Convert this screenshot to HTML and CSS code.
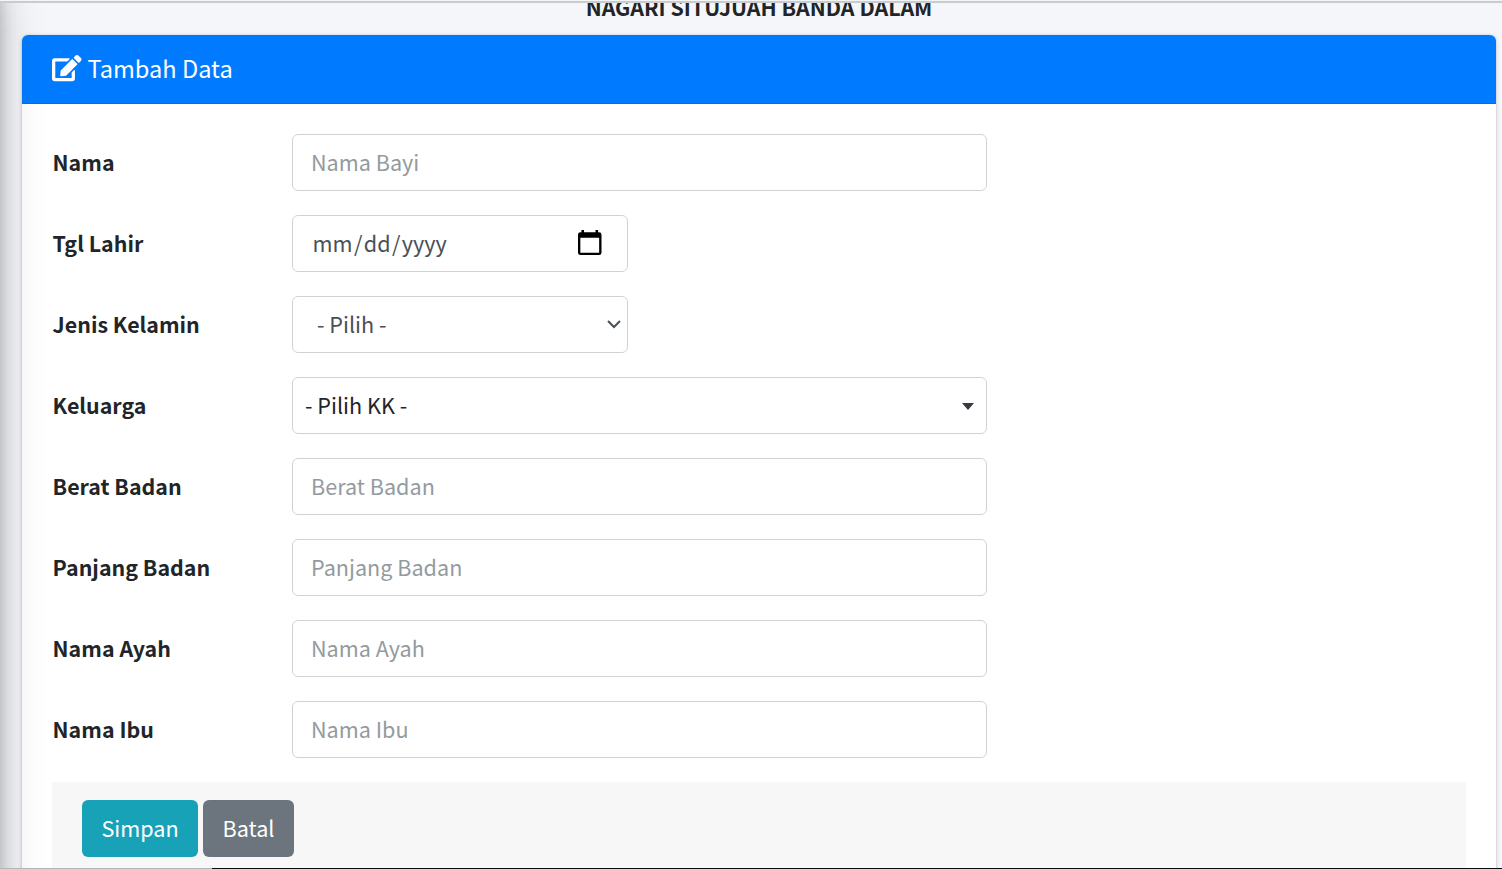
FILE: index.html
```html
<!DOCTYPE html>
<html lang="id">
<head>
<meta charset="utf-8">
<title>Tambah Data</title>
<link rel="stylesheet" href="styles.css">
</head>
<body>
<div class="page">
  <div class="topline"></div>
  <h1 class="heading">NAGARI SITUJUAH BANDA DALAM</h1>
  <main class="card">
    <header class="card-header">
      <svg class="edit-icon" viewBox="0 0 576 512"><path fill="#fff" d="M402.6 83.2l90.2 90.2c3.8 3.8 3.8 10 0 13.8L274.4 405.6l-92.8 10.3c-12.4 1.4-22.9-9.1-21.5-21.5l10.3-92.8L388.8 83.2c3.8-3.8 10-3.8 13.8 0zm162-22.9l-48.8-48.8c-15.2-15.2-39.9-15.2-55.2 0l-35.4 35.4c-3.8 3.8-3.8 10 0 13.8l90.2 90.2c3.8 3.8 10 3.8 13.8 0l35.4-35.4c15.2-15.3 15.2-40 0-55.2zM384 346.2V448H64V128h229.8c3.2 0 6.2-1.3 8.5-3.5l40-40c7.6-7.6 2.2-20.5-8.5-20.5H48C21.5 64 0 85.5 0 112v352c0 26.5 21.5 48 48 48h352c26.5 0 48-21.5 48-48V306.2c0-10.7-12.9-16-20.5-8.5l-40 40c-2.2 2.3-3.5 5.3-3.5 8.5z"/></svg>
      <span class="title">Tambah Data</span>
    </header>
    <form class="card-body">
      <div class="row"><label class="label">Nama</label><input class="control" placeholder="Nama Bayi"></div>
      <div class="row"><label class="label">Tgl Lahir</label>
        <div class="control short date"><span class="date-text">mm<span class="slash">/</span>dd<span class="slash">/</span>yyyy</span>
          <svg class="calendar" viewBox="0 0 24 26"><path fill="#000" fill-rule="evenodd" d="M3.5 0h2.6v2.4h11.8V0h2.6v2.4h1A2.5 2.5 0 0 1 24 4.9v18.2a2.5 2.5 0 0 1-2.5 2.4h-19A2.5 2.5 0 0 1 0 23.1V4.9A2.5 2.5 0 0 1 2.5 2.4h1zM2.4 8v15.2h19.2V8z"/></svg>
        </div></div>
      <div class="row"><label class="label">Jenis Kelamin</label>
        <div class="control short select"><span>- Pilih -</span>
          <svg class="chevron" viewBox="0 0 14 9"><path fill="none" stroke="#495057" stroke-width="2" d="M1 1l6 6 6-6"/></svg>
        </div></div>
      <div class="row"><label class="label">Keluarga</label>
        <div class="control select2"><span>- Pilih KK -</span><i class="caret"></i></div></div>
      <div class="row"><label class="label">Berat Badan</label><input class="control" placeholder="Berat Badan"></div>
      <div class="row"><label class="label">Panjang Badan</label><input class="control" placeholder="Panjang Badan"></div>
      <div class="row"><label class="label">Nama Ayah</label><input class="control" placeholder="Nama Ayah"></div>
      <div class="row"><label class="label">Nama Ibu</label><input class="control" placeholder="Nama Ibu"></div>
      <div class="card-footer">
        <button class="btn save" type="button">Simpan</button>
        <button class="btn cancel" type="button">Batal</button>
      </div>
    </form>
  </main>
  <div class="sidebar-shadow"></div>
  <div class="bottomline"></div>
</div>
</body>
</html>
```
FILE: styles.css
```css
* { box-sizing: border-box; }
body { margin: 0; }
.page {
  position: relative;
  width: 1502px;
  height: 869px;
  overflow: hidden;
  background: #f4f6f9;
  color: #212529;
  font: 21.6px/36px "Noto Sans CJK SC", "Noto Sans", sans-serif;
}
.topline {
  position: absolute;
  z-index: 3;
  inset: 0 0 auto;
  height: 3px;
  background: #c9cccf;
  border-top: 1px solid #f3f4f5;
}
.heading {
  margin: -11px 0 10px 16px;
  height: 36px;
  text-align: center;
  font-size: 21.4px;
  line-height: 36px;
  font-weight: 700;
}
.card {
  margin: 0 6px 0 22px;
  height: 900px;
  background: #fff;
  border-radius: 6px;
  box-shadow: 0 0 1px rgba(0,0,0,.25), 0 1px 4px rgba(0,0,0,.2);
}
.card-header {
  display: flex;
  align-items: center;
  gap: 7px;
  height: 69px;
  padding: 0 30px 1px;
  color: #fff;
  background: #007bff;
  border-bottom: 1px solid #006fe6;
  border-radius: 6px 6px 0 0;
}
.edit-icon { width: 29.5px; height: 26.2px; }
.title { margin-left: -1px; padding-bottom: 1px; font-size: 23.6px; }
.card-body {
  display: flex;
  flex-direction: column;
  gap: 24px;
  padding: 30px;
}
.row { display: flex; align-items: center; height: 57px; }
.label { width: 240px; padding: 0 0 2px 0.6px; font-size: 21.4px; font-weight: 700; }
.control {
  display: flex;
  align-items: center;
  width: 695px;
  height: 57px;
  padding: 0 18px 2px;
  border: 1px solid #d0d3d6;
  border-radius: 6px;
  background: #fff;
  color: #495057;
  font: inherit;
}
.control::placeholder { color: #939ba0; opacity: 1; }
.short { width: 336px; }
.date { justify-content: space-between; padding: 0 25.5px 2px 19.5px; }
.slash { padding: 0 1.4px; }
.calendar { width: 23.5px; height: 25.5px; }
.select { justify-content: space-between; padding: 0 6px 2px 24px; }
.chevron { width: 14px; height: 9px; margin-top: 2px; }
.select2 { justify-content: space-between; padding: 0 12px 2px; color: #212529; }
.caret {
  margin-top: 3px;
  border: 6px solid transparent;
  border-top: 7px solid #343a40;
  border-bottom: 0;
}
.card-footer {
  display: flex;
  gap: 5px;
  height: 110px;
  padding: 18px 30px;
  background: #f7f7f7;
}
.btn {
  height: 57px;
  padding: 0 0 2px;
  border: 0;
  border-radius: 6px;
  color: #fff;
  font: inherit;
}
.save { width: 116px; background: #17a2b8; }
.cancel { width: 91px; background: #6c757d; }
.sidebar-shadow {
  position: absolute;
  z-index: 2;
  left: -300px;
  top: -32px;
  width: 300px;
  height: 1000px;
  box-shadow: 0 21px 42px rgba(0,0,0,.22), 0 15px 15px rgba(0,0,0,.2);
}
.bottomline {
  position: absolute;
  z-index: 3;
  inset: auto 0 0;
  height: 1px;
  background: linear-gradient(90deg, #b5b5b5 212px, #0c0c0c 212px);
}
```
